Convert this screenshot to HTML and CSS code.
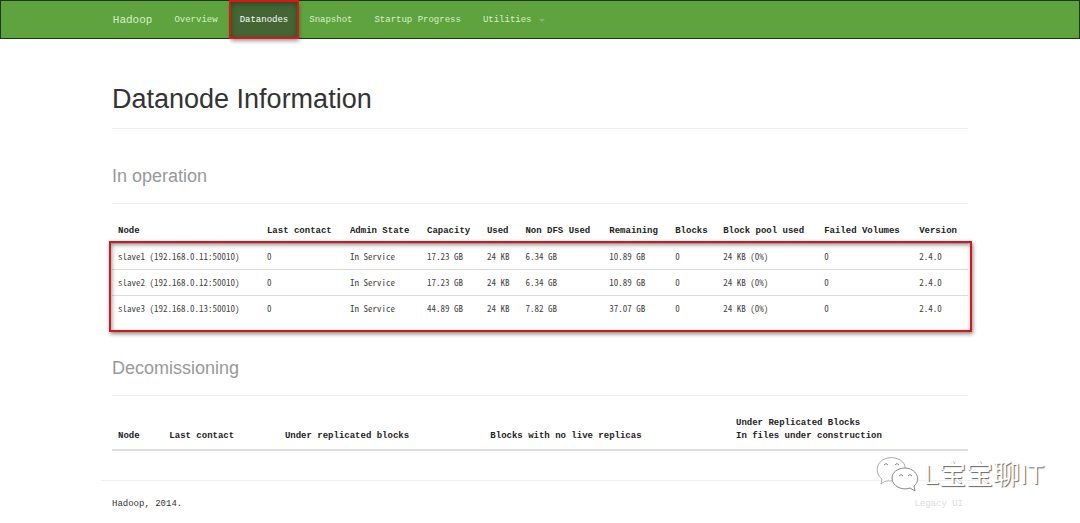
FILE: index.html
```html
<!DOCTYPE html>
<html lang="en">
<head>
<meta charset="utf-8">
<title>Datanode Information</title>
<link rel="stylesheet" href="styles.css">
</head>
<body>
<header class="navbar">
  <nav class="container nav">
    <a class="brand" href="#">Hadoop</a>
    <a class="nav-link" href="#">Overview</a>
    <a class="nav-link active" href="#">Datanodes</a>
    <a class="nav-link" href="#">Snapshot</a>
    <a class="nav-link" href="#">Startup Progress</a>
    <button class="nav-link menu" type="button">Utilities <span class="caret"></span></button>
  </nav>
</header>
<main class="container">
  <h1>Datanode Information</h1>
  <h2>In operation</h2>
  <div class="marked">
    <table class="nodes">
      <colgroup><col class="n1"><col class="n2"><col class="n3"><col class="n4"><col class="n5"><col class="n6"><col class="n7"><col class="n8"><col class="n9"><col class="n10"><col class="n11"></colgroup>
      <thead><tr><th>Node</th><th>Last contact</th><th>Admin State</th><th>Capacity</th><th>Used</th><th>Non DFS Used</th><th>Remaining</th><th>Blocks</th><th>Block pool used</th><th>Failed Volumes</th><th>Version</th></tr></thead>
      <tbody>
        <tr><td>slave1 (192.168.0.11:50010)</td><td>0</td><td>In Service</td><td>17.23 GB</td><td>24 KB</td><td>6.34 GB</td><td>10.89 GB</td><td>0</td><td>24 KB (0%)</td><td>0</td><td>2.4.0</td></tr>
        <tr><td>slave2 (192.168.0.12:50010)</td><td>0</td><td>In Service</td><td>17.23 GB</td><td>24 KB</td><td>6.34 GB</td><td>10.89 GB</td><td>0</td><td>24 KB (0%)</td><td>0</td><td>2.4.0</td></tr>
        <tr><td>slave3 (192.168.0.13:50010)</td><td>0</td><td>In Service</td><td>44.89 GB</td><td>24 KB</td><td>7.82 GB</td><td>37.07 GB</td><td>0</td><td>24 KB (0%)</td><td>0</td><td>2.4.0</td></tr>
      </tbody>
    </table>
    <div class="marker"></div>
  </div>
  <h2>Decomissioning</h2>
  <table class="decom">
    <colgroup><col class="d1"><col class="d2"><col class="d3"><col class="d4"><col class="d5"></colgroup>
    <thead><tr><th>Node</th><th>Last contact</th><th>Under replicated blocks</th><th>Blocks with no live replicas</th><th>Under Replicated Blocks<br>In files under construction</th></tr></thead>
  </table>
</main>
<footer class="footer">
  <span>Hadoop, 2014.</span>
  <a class="legacy" href="#">Legacy UI</a>
</footer>
<div class="watermark">
  <svg width="44" height="38" viewBox="0 0 44 38" fill="#fff" stroke="#aaa" stroke-width="1" aria-hidden="true">
    <path d="M16 25C12 25 10 24 5 28L6 23C-2 17 0 4 12 2C22 0 30 7 29 12"/>
    <path stroke="#888" d="M29 12C40 12 46 24 38 30L39 35L34 32C26 35 16 30 16 22C16 16 22 12 29 12Z"/>
    <path fill="none" stroke="#888" d="M8 9q2-3 4 0M19 9q2-3 4 0M23 20q2-3 4 0M32 20q2-3 4 0"/>
  </svg>
  <span>L宝宝聊IT</span>
</div>
</body>
</html>
```
FILE: styles.css
```css
* { box-sizing: border-box; }
body {
  margin: 0;
  background: #fff;
  color: #333;
  font-family: "Liberation Mono", monospace;
  font-size: 9px;
  line-height: 13px;
}
.container { width: 80%; max-width: 1170px; margin: 0 auto; padding: 0 4px; }
.navbar { background: #5fa33e; border: 1px solid #1c3a10; }
.nav { display: flex; align-items: stretch; height: 37px; }
.nav a, .nav button {
  display: flex;
  align-items: center;
  color: #d8efcc;
  text-decoration: none;
  white-space: nowrap;
}
.nav .brand { font-size: 11px; padding: 2px 11px 0 0; }
.nav .nav-link { padding: 2px 11px 0; }
.nav .active {
  position: relative;
  color: #fff;
  background: #436634;
  margin: 0 0 0 1px;
  padding: 2px 10px 0;
  outline: 2px solid #d9161c;
  outline-offset: -1px;
  box-shadow: inset 0 2px 6px #263f1b, 1px 3px 4px #0006;
}
.nav .menu { border: 0; background: none; font: inherit; gap: 8px; }
.caret { border: 3px solid transparent; border-top-color: #8fae83; border-bottom: 0; }
h1, h2 {
  margin: 0;
  font-family: "Liberation Sans", Arial, sans-serif;
  font-weight: 400;
  border-bottom: 1px solid #eee;
}
h1 { margin-top: 44px; padding-bottom: 13px; font-size: 27px; line-height: 32px; }
h2 { margin-top: 36px; padding-bottom: 16px; font-size: 18px; line-height: 22px; color: #999; }
table { width: 100%; table-layout: fixed; border-collapse: collapse; }
th, td { padding: 6px; text-align: left; vertical-align: bottom; white-space: nowrap; }
th { color: #222; font-weight: 700; }
.nodes th { padding: 7px 6px 5px; }
td {
  font-family: "Noto Sans Mono CJK SC", "Liberation Mono", monospace;
  color: #444;
  border-top: 1px solid #ddd;
}
.marked { position: relative; margin-top: 14px; }
.marker {
  position: absolute;
  inset: 23px -4px -11px -3px;
  border: 2px solid #d0181e;
  box-shadow: 1px 2px 4px #0007, inset 1px 2px 4px #0006;
}
.n1 { width: 17.4%; } .n2 { width: 9.7%; } .n3 { width: 9%; } .n4 { width: 7%; }
.n5 { width: 4.5%; } .n6 { width: 9.8%; } .n7 { width: 7.7%; } .n8 { width: 5.6%; }
.n9 { width: 11.8%; } .n10 { width: 11.1%; } .n11 { width: 6.4%; }
.decom { margin-top: 15px; border-bottom: 2px solid #ddd; }
.d1 { width: 6%; } .d2 { width: 13.5%; } .d3 { width: 24%; } .d4 { width: 28.7%; } .d5 { width: 27.8%; }
.footer {
  display: flex;
  justify-content: space-between;
  margin: 29px 101px 0;
  padding: 17px 16px 0 11px;
  border-top: 1px solid #f0f0f0;
}
.legacy { color: #ddd; text-decoration: none; }
.watermark {
  position: absolute;
  top: 456px;
  right: 36px;
  display: flex;
  align-items: center;
  gap: 4px;
  color: #fff;
  font: 27px/38px "Liberation Sans", "Noto Sans CJK SC", sans-serif;
  text-shadow: 1px 1px 1px #666;
}
```
